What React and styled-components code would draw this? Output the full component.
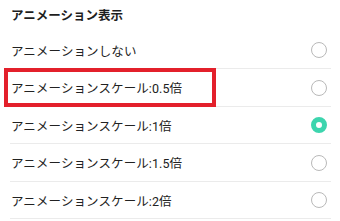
import styled, { createGlobalStyle } from "styled-components";

const GlobalStyle = createGlobalStyle`
  html, body {
    margin: 0;
    padding: 0;
    background: #ffffff;
  }
  body {
    font-family: Roboto, "Noto Sans CJK JP", sans-serif;
    color: #222222;
  }
`;

const Container = styled.div`
  width: 340px;
  height: 221px;
  overflow: hidden;
  background: #ffffff;
`;

const Header = styled.div`
  height: 32px;
  display: flex;
  align-items: center;
  padding-left: 11px;
  padding-bottom: 3px;
  box-sizing: border-box;
  font-size: 12.5px;
  font-weight: 700;
  color: #1e1e1e;
`;

const List = styled.div`
  display: flex;
  flex-direction: column;
`;

const Row = styled.div`
  position: relative;
  height: ${(props) => props.h}px;
  margin: 0 9px 0 10px;
  display: flex;
  align-items: center;
  justify-content: space-between;
  border-bottom: 1px solid #ebebeb;
  box-sizing: border-box;
`;

const Label = styled.span`
  font-size: 12.5px;
  padding-left: 1px;
  color: #222222;
  letter-spacing: 0.1px;
`;

const Radio = styled.span`
  width: 16px;
  height: 16px;
  border-radius: 50%;
  box-sizing: border-box;
  margin-right: 4px;
  border: ${(props) =>
    props.checked ? "5px solid #3dd5ae" : "1px solid #b9b9b9"};
  background: #ffffff;
`;

const Highlight = styled.div`
  position: absolute;
  left: -6px;
  top: -1px;
  width: 212px;
  height: 39px;
  border: 4px solid #e3202b;
  box-sizing: border-box;
  pointer-events: none;
`;

const items = [
  { id: 1, label: "アニメーションしない", h: 37 },
  { id: 2, label: "アニメーションスケール:0.5倍", h: 38, marked: true },
  { id: 3, label: "アニメーションスケール:1倍", h: 37, checked: true },
  { id: 4, label: "アニメーションスケール:1.5倍", h: 38 },
  { id: 5, label: "アニメーションスケール:2倍", h: 37 },
];

const App = () => {
  return (
    <>
      <GlobalStyle />
      <Container>
        <Header>アニメーション表示</Header>
        <List>
          {items.map((item) => (
            <Row key={item.id} h={item.h}>
              <Label>{item.label}</Label>
              <Radio checked={item.checked} />
              {item.marked && <Highlight />}
            </Row>
          ))}
        </List>
      </Container>
    </>
  );
};

export default App;
